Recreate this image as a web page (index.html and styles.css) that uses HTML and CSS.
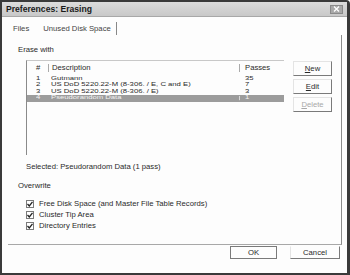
FILE: index.html
```
<!DOCTYPE html>
<html lang="en">
<head>
    <meta charset="UTF-8">
    <title>Preferences: Erasing</title>
    <link rel="stylesheet" href="styles.css">
</head>
<body>
    <div class="window">
        <div class="titlebar">
            <span class="title">Preferences: Erasing</span>
            <span class="close">
                <svg width="7" height="6" viewBox="0 0 7 6"><path d="M1 0.5 L6 5.5 M6 0.5 L1 5.5" stroke="#fff" stroke-width="1.3"/></svg>
            </span>
        </div>

        <div class="tabs">
            <span class="tab">Files</span>
            <span class="tab active"><span>Unused Disk Space</span></span>
        </div>

        <div class="panel">
            <div class="group-label">Erase with</div>
            <div class="erase-row">
                <div class="list">
                    <div class="list-head">
                        <span class="c-num">#</span>
                        <span class="c-desc">Description</span>
                        <span class="c-pass">Passes</span>
                    </div>
                    <div class="list-row">
                        <span class="c-num">1</span>
                        <span class="c-desc">Gutmann</span>
                        <span class="c-pass">35</span>
                    </div>
                    <div class="list-row">
                        <span class="c-num">2</span>
                        <span class="c-desc">US DoD 5220.22-M (8-306. / E, C and E)</span>
                        <span class="c-pass">7</span>
                    </div>
                    <div class="list-row">
                        <span class="c-num">3</span>
                        <span class="c-desc">US DoD 5220.22-M (8-306. / E)</span>
                        <span class="c-pass">3</span>
                    </div>
                    <div class="list-row selected-row">
                        <span class="c-num">4</span>
                        <span class="c-desc">Pseudorandom Data</span>
                        <span class="c-pass">1</span>
                    </div>
                </div>
                <div class="side-buttons">
                    <button class="btn"><u>N</u>ew</button>
                    <button class="btn"><u>E</u>dit</button>
                    <button class="btn disabled"><u>D</u>elete</button>
                </div>
            </div>

            <div class="selected-text">Selected: Pseudorandom Data (1 pass)</div>

            <div class="group-label overwrite">Overwrite</div>
            <div class="checks">
                <label class="check"><span class="box"><svg width="6" height="6" viewBox="0 0 6 6"><path d="M0.5 3 L2.3 5 L5.5 0.8" fill="none" stroke="#222" stroke-width="1.3"/></svg></span>Free Disk Space (and Master File Table Records)</label>
                <label class="check"><span class="box"><svg width="6" height="6" viewBox="0 0 6 6"><path d="M0.5 3 L2.3 5 L5.5 0.8" fill="none" stroke="#222" stroke-width="1.3"/></svg></span>Cluster Tip Area</label>
                <label class="check"><span class="box"><svg width="6" height="6" viewBox="0 0 6 6"><path d="M0.5 3 L2.3 5 L5.5 0.8" fill="none" stroke="#222" stroke-width="1.3"/></svg></span>Directory Entries</label>
            </div>
        </div>

        <div class="footer">
            <button class="btn ok">OK</button>
            <button class="btn cancel">Cancel</button>
        </div>
    </div>
</body>
</html>
```

FILE: styles.css
```
body {
    margin: 0;
    font-family: "Liberation Sans", Arial, sans-serif;
    font-size: 7.7px;
    color: #2a2a2a;
    background-color: #fff;
}
.window {
    width: 350px;
    height: 275px;
    box-sizing: border-box;
    border: 2px solid #3a3a3a;
    border-right-width: 3px;
    border-top-right-radius: 4px;
    background-color: #fdfdfd;
    display: flex;
    flex-direction: column;
}
.titlebar {
    height: 14px;
    flex: none;
    border-bottom: 1px solid #a8a8a8;
    background: linear-gradient(#dcdcdc, #c8c8c8);
    display: flex;
    align-items: center;
    justify-content: space-between;
    padding-left: 4px;
}
.title {
    font-weight: bold;
    font-size: 8.6px;
    color: #1a1a1a;
    line-height: 14px;
}
.close {
    width: 11px;
    height: 7px;
    margin-right: 4px;
    background-color: #a9a9a9;
    border: 1px solid #8a8a8a;
    display: flex;
    align-items: center;
    justify-content: center;
}
.tabs {
    height: 18px;
    flex: none;
    display: flex;
    align-items: flex-start;
    padding-left: 11px;
}
.tab {
    line-height: 8px;
    padding-top: 8px;
    color: #444;
}
.tab.active {
    margin-left: 9px;
    margin-top: 5px;
    height: 10px;
    padding: 3px 5px 0 5px;
    border-right: 1px solid #888;
}
.panel {
    flex: none;
    margin: 0 5px 0 6px;
    padding: 11px 0 0 10px;
    box-sizing: border-box;
    height: 210px;
    border-right: 1px solid #8c8c8c;
    border-bottom: 1px solid #a8a8a8;
}
.group-label {
    line-height: 8px;
}
.erase-row {
    display: flex;
    margin-top: 6px;
}
.list {
    margin-left: 8px;
    width: 258px;
    height: 95px;
    box-sizing: border-box;
    border-left: 1px solid #8a8a8a;
    border-top: 1px solid #c8c8c8;
}
.list-head {
    display: flex;
    height: 13px;
    line-height: 13px;
    margin-bottom: 2px;
}
.list-head .c-desc,
.list-head .c-pass {
    border-left: 1px solid #aaa;
    height: 8px;
    line-height: 8px;
    margin-top: 3px;
}
.list-row {
    display: flex;
    height: 6.4px;
    white-space: nowrap;
}
.list-row span {
    display: block;
    height: 6.4px;
    line-height: 6.4px;
    transform: scaleY(0.7);
}
.c-num {
    width: 21px;
    padding-left: 9px;
    box-sizing: border-box;
}
.c-desc {
    width: 191px;
    padding-left: 3px;
    box-sizing: border-box;
}
.c-pass {
    padding-left: 5px;
    flex: 1;
}
.list-row .c-pass {
    padding-left: 6px;
}
.selected-row {
    background-color: #9c9c9c;
    color: #f2f2f2;
}
.selected-row .c-pass {
    border-left: 1px solid #d8d8d8;
    padding-left: 5px;
}
.side-buttons {
    margin-left: 9px;
    margin-top: 1px;
    display: flex;
    flex-direction: column;
    gap: 3px;
}
.btn {
    font-family: "Liberation Sans", Arial, sans-serif;
    font-size: 7.7px;
    color: #2a2a2a;
    background-color: #fdfdfd;
    border: 1px solid;
    border-color: #e4e4e4 #7a7a7a #7a7a7a #e4e4e4;
    padding: 0;
    width: 39px;
    height: 15px;
    line-height: 13px;
}
.btn u {
    text-underline-offset: 1px;
}
.btn.disabled {
    color: #a8a8a8;
}
.selected-text {
    margin: 8px 0 0 8px;
    line-height: 8px;
}
.overwrite {
    margin-top: 11px;
}
.checks {
    margin-top: 8px;
    padding-left: 8px;
}
.check {
    display: flex;
    align-items: center;
    height: 11px;
}
.box {
    width: 6px;
    height: 6px;
    border: 1px solid #7a7a7a;
    background-color: #fff;
    margin-right: 5px;
    display: flex;
    align-items: center;
    justify-content: center;
}
.footer {
    display: flex;
    justify-content: flex-end;
    align-items: flex-start;
    gap: 13px;
    padding: 1px 7px 0 0;
}
.footer .btn {
    height: 13px;
    line-height: 11px;
}
.ok {
    width: 47px;
    border-color: #7a7a7a;
}
.cancel {
    width: 50px;
    border-color: #fdfdfd #7a7a7a #7a7a7a #e4e4e4;
}
```
